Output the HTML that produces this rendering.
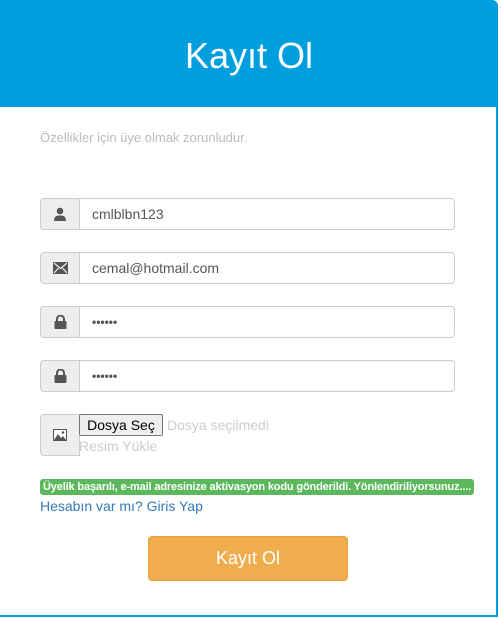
<!DOCTYPE html>
<html><head><meta charset="utf-8"><style>
body{margin:0;width:501px;height:618px;background:#fff;font-family:"Liberation Sans",sans-serif;position:relative;overflow:hidden}
.panel{position:absolute;left:-2px;top:0;width:496px;height:615px;border:2px solid #009edf;border-top:0;border-radius:0 6px 0 0}
.hdr{position:absolute;left:0;top:0;width:498px;height:107px;background:#009edf;border-radius:0 6px 0 0;color:#fff;font-size:36px;text-align:center;line-height:112px}
.sub{position:absolute;left:40px;top:130px;color:#bbb;font-size:13px}
.grp{position:absolute;left:40px;width:415px;height:32px}
.ad{position:absolute;left:0;top:0;width:38px;height:30px;border:1px solid #ccc;border-radius:4px 0 0 4px;background:#eee;display:flex;align-items:center;justify-content:center}
.in{position:absolute;left:39px;top:0;width:362px;height:30px;border:1px solid #ccc;border-radius:0 4px 4px 0;font-size:14px;color:#555;line-height:30px;padding-left:12px}
.alert{position:absolute;left:40px;top:479px;width:434px;height:16px;background:#5cb85c;border-radius:3px;color:#fff;font-size:11px;font-weight:bold;line-height:16px;padding-left:3px;box-sizing:border-box;white-space:nowrap;overflow:hidden;letter-spacing:-0.15px}
.link{position:absolute;left:40px;top:498px;color:#337ab7;font-size:14px}
.btn{position:absolute;left:148px;top:536px;width:198px;height:43px;background:#f0ad4e;border:1px solid #eea236;border-radius:4px;color:#fff;font-size:18px;text-align:center;line-height:43px}
</style></head><body>
<div class="panel"></div>
<div class="hdr">Kayıt Ol</div>
<div class="sub">Özellikler için üye olmak zorunludur.</div>
<div class="grp" style="top:198px"><div class="ad"><svg width="14" height="14" viewBox="0 0 14 14"><circle cx="7" cy="4" r="3.3" fill="#555"/><path d="M1 14 Q1 8 7 8.5 Q13 8 13 14Z" fill="#555"/></svg></div><div class="in">cmlblbn123</div></div>
<div class="grp" style="top:252px"><div class="ad"><svg width="15" height="12" viewBox="0 0 15 12"><rect x="0" y="0" width="15" height="12" fill="#555"/><path d="M1 1 L7.5 6.5 L14 1 M1 11 L5.5 6 M14 11 L9.5 6" stroke="#eee" stroke-width="1.2" fill="none"/></svg></div><div class="in">cemal@hotmail.com</div></div>
<div class="grp" style="top:306px"><div class="ad"><svg width="13" height="14" viewBox="0 0 13 14"><path d="M3 6 V4 a3.5 3.5 0 0 1 7 0 V6" stroke="#555" stroke-width="2" fill="none"/><rect x="0.5" y="6" width="12" height="8" rx="1" fill="#555"/></svg></div><div class="in" style="font-size:12px;font-weight:bold">••••••</div></div>
<div class="grp" style="top:360px"><div class="ad"><svg width="13" height="14" viewBox="0 0 13 14"><path d="M3 6 V4 a3.5 3.5 0 0 1 7 0 V6" stroke="#555" stroke-width="2" fill="none"/><rect x="0.5" y="6" width="12" height="8" rx="1" fill="#555"/></svg></div><div class="in" style="font-size:12px;font-weight:bold">••••••</div></div>
<div class="ad" style="position:absolute;left:40px;top:414px;width:38px;height:40px"><svg width="14" height="12" viewBox="0 0 14 12"><rect x="0.5" y="0.5" width="13" height="11" fill="#fff" stroke="#555"/><path d="M1 11 L5 5 L8 9 L10 7 L13 11Z" fill="#555"/><circle cx="10" cy="3.5" r="1.3" fill="#555"/></svg></div>
<div style="position:absolute;left:79px;top:414px;width:82px;height:20px;border:1px solid #777;border-radius:2px;background:#efefef;font-size:14px;line-height:20px;text-align:center;color:#000">Dosya Seç</div>
<div style="position:absolute;left:167px;top:417px;font-size:14px;color:#ccc">Dosya seçilmedi</div>
<div style="position:absolute;left:79px;top:438px;font-size:14px;color:#ccc">Resim Yükle</div>
<div class="alert">Üyelik başarılı, e-mail adresinize aktivasyon kodu gönderildi. Yönlendiriliyorsunuz....</div>
<div class="link">Hesabın var mı? Giris Yap</div>
<div class="btn">Kayıt Ol</div>
</body></html>
